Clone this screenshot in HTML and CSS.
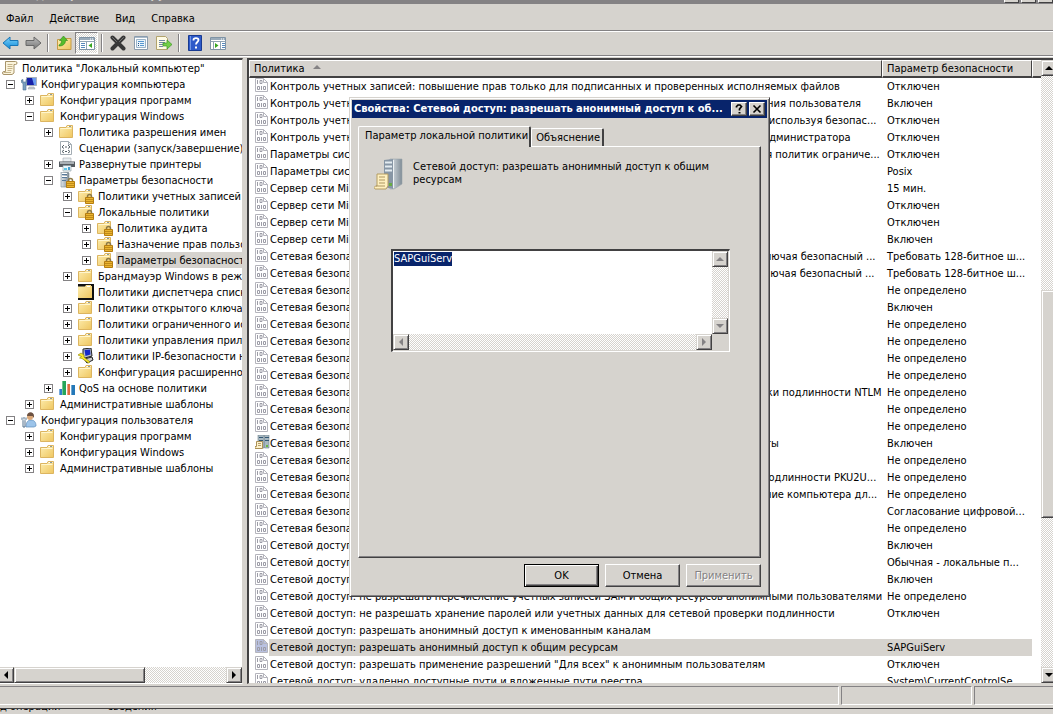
FILE: index.html
```html
<!DOCTYPE html>
<html lang="ru">
<head>
<meta charset="utf-8">
<title>Редактор локальной групповой политики</title>
<link rel="stylesheet" href="styles.css">
</head>
<body>
<svg class="sprite" aria-hidden="true">
  <defs>
    <linearGradient id="g-folder" x1="0" y1="0" x2="1" y2="1"><stop offset="0" stop-color="#fdeeb0"/><stop offset="1" stop-color="#efc660"/></linearGradient>
    <linearGradient id="g-tower" x1="0" y1="0" x2="1" y2="0"><stop offset="0" stop-color="#dfe5ea"/><stop offset="1" stop-color="#7f8c96"/></linearGradient>
    <linearGradient id="g-blue" x1="0" y1="0" x2="0" y2="1"><stop offset="0" stop-color="#7fd3fb"/><stop offset="1" stop-color="#0f8ad8"/></linearGradient>
    <linearGradient id="g-gray" x1="0" y1="0" x2="0" y2="1"><stop offset="0" stop-color="#bdbdbd"/><stop offset="1" stop-color="#777"/></linearGradient>
  </defs>
  <symbol id="folder" viewBox="0 0 16 16"><path d="M.5 3.500H7l1-2h5.500v12H.5z" fill="url(#g-folder)" stroke="#dcb560"/><path d="M8.500 2.500h4" stroke="#fff"/><path d="M10 2.500h2" stroke="#8a9aa0"/><path d="M1.500 4.500h11" stroke="#fff6cf"/></symbol>
  <symbol id="lock" viewBox="0 0 16 16"><path d="M9.500 10V8.500a2 2 0 0 1 4 0V10" fill="none" stroke="#8c7a4a" stroke-width="1.500"/><path d="M7.500 9.500h8v6h-8z" fill="#eab530" stroke="#b57d10"/><path d="M8 11.500h7M8 13.500h7" stroke="#c18a18"/></symbol>
  <symbol id="folder-lock" viewBox="0 0 16 16"><use href="#folder"/><use href="#lock"/></symbol>
  <symbol id="scroll" viewBox="0 0 16 16"><path d="M3.500 1.500h10a1.500 1.500 0 0 1 0 3H12v8.500l-2 1.500H2a1.500 1.500 0 0 1 0-3h1.500z" fill="#fbf4dc" stroke="#a8946a"/><path d="M5.500 4.500h5M5.500 6.500h5M5.500 8.500h5M5.500 10.500h4M2 12.500h7" stroke="#c5b48a"/></symbol>
  <symbol id="computer" viewBox="0 0 16 16"><path d="M5.500 1.500h10v8h-10z" fill="#1722a8" stroke="#aab2ba"/><path d="M11 2h4v7h-2z" fill="#6c9cf0"/><path d="M8 11h5l1 2H7z" fill="#c8cdd2" stroke="#8b959d" stroke-width=".5"/><path d="M.5 4v2.500l1.500 1V14h3V7.500l1-1V4L5 3.500V6H2V3.500z" fill="#7aa0c0" stroke="#4d7090" stroke-width=".6"/></symbol>
  <symbol id="user" viewBox="0 0 16 16"><path d="M5 15c0-5 2-7 5-7s5 2 5 6l-2 1z" fill="#9cc4ea" stroke="#5d8cba" stroke-width=".7"/><circle cx="9" cy="5" r="3" fill="#dba878"/><path d="M6 4c0-5 7-5 7 0v2l-1.500-2z" fill="#6c5141"/><path d="M1 5.500v2l1 1V15h2V8.500l1-1v-2M3 5v2.500" fill="none" stroke="#52718d"/></symbol>
  <symbol id="script" viewBox="0 0 16 16"><path d="M1.500 1.500h8l3 3v10h-11z" fill="#fff" stroke="#a3acb3"/><path d="M9.500 1.500v3h3" fill="none" stroke="#a3acb3"/><path d="M5 5L3 7l2 1.500M9 5l2 2-2 1.500M6 7h2M5 10l-2 1.500L5 13M9 10l2 1.500L9 13M6 11.500h2" fill="none" stroke="#59636b"/></symbol>
  <symbol id="printer" viewBox="0 0 16 16"><path d="M4 2h8v4H4z" fill="#e8edf0" stroke="#a5adb3" stroke-width=".6"/><path d="M0 5.500h16V11H0z" fill="#555b60"/><path d="M1 6h14v2H1z" fill="#a9b0b5"/><path d="M4 9.500h8V15H4z" fill="#e9f6fb" stroke="#88979f" stroke-width=".6"/><path d="M5 12h3v2H5z" fill="#5ec6e8"/><path d="M9 11h2v3H9z" fill="#4b9fcb"/></symbol>
  <symbol id="server-lock" viewBox="0 0 16 16"><path d="M2 0h7l1 1v14H2z" fill="url(#g-tower)" stroke="#7d8b96" stroke-width=".6"/><path d="M3 2.500h5M3 5.500h5M3 8.500h4" stroke="#56789b"/><path d="M3 1.500h5M3 4.500h5" stroke="#fff"/><use href="#lock"/></symbol>
  <symbol id="folder-dark" viewBox="0 0 16 16"><path d="M0 0h16v16H0z" fill="#111"/><path d="M0 2.500h7l1-1.500h5v1h1v12H0z" fill="url(#g-folder)"/><path d="M9 2.500h3" stroke="#fff"/></symbol>
  <symbol id="ipsec" viewBox="0 0 16 16"><path d="M5 1l8-1 1 8-7 2-2-1z" fill="#b7bdc8" stroke="#222"/><path d="M6.500 2l5.500-.5.500 5-5 1.500z" fill="#1428c8"/><path d="M6 11l8-2 1 3-6 3z" fill="#ccc" stroke="#222"/><path d="M0 7l3-2 3 2v2l6 5-1.500 1L4 10.500 1.500 10l2-1.500z" fill="#f7e92a" stroke="#8e8200" stroke-width=".6"/></symbol>
  <symbol id="bars" viewBox="0 0 16 16"><path d="M0 9h3v6H0z" fill="#2d7dcb"/><path d="M3 1h4v14H3z" fill="#25a55a"/><path d="M8 4h3v11H8z" fill="#df6c3f"/><path d="M12 5h4v10h-4z" fill="#2378b8"/><path d="M.5 9v6M3.500 1v14M8.500 4v11M12.500 5v10" stroke="#fff" stroke-opacity=".35"/></symbol>
  <symbol id="binary" viewBox="0 0 15 15"><path d="M.5.500h8l4 4v9H.5z" class="sheet" stroke="#b5b5bd"/><path d="M8.500.500v4h4" fill="none" stroke="#b5b5bd"/><path d="M2.500 2v4M5 2.500h2v3H5zM2.500 8.500h2v3h-2zM6.500 8v4M8.500 8.500h2v3h-2z" fill="none" stroke="#9c9ca6"/></symbol>
  <symbol id="servers" viewBox="0 0 15 15"><path d="M3 0h6v13H3zM9.500 0H14v13H9.500z" fill="#a8b8c1" stroke="#71838f" stroke-width=".6"/><path d="M4 2.500h4M4 5.500h4M10 2.500h4M10 5.500h4" stroke="#315673"/><path d="M11 10h2v2h-2z" fill="#67b93e"/><path d="M1.500 6.500h6v7H0v-2h1.500z" fill="#fdf2cc" stroke="#ac9156"/><path d="M3 8.500h3M3 10.500h3" stroke="#b69c68"/></symbol>
  <symbol id="back" viewBox="0 0 18 16"><path d="M1 8l7-6v3.500h8v5H8V14z" fill="url(#g-blue)" stroke="#1875b5"/></symbol>
  <symbol id="forward" viewBox="0 0 18 16"><path d="M17 8l-7-6v3.500H2v5h8V14z" fill="url(#g-gray)" stroke="#686868"/></symbol>
  <symbol id="up" viewBox="0 0 16 16"><path d="M1.500 4.500H6l1-1h8v11H1.500z" fill="url(#g-folder)" stroke="#c59a45"/><path d="M3 10c2-1 2.500-2.500 2.500-4.500H3.500L7.500 1l4 4.500h-2C9.500 9 7 11 3 11z" fill="#55bd2c" stroke="#2d8419" stroke-width=".6"/></symbol>
  <symbol id="panel" viewBox="0 0 18 16"><path d="M1.500 2.500h15v12h-15z" fill="#fff" stroke="#7f93a5"/><path d="M2 3h14v2H2z" fill="#9aabba"/><path d="M12 4h1M14 4h1" stroke="#fff"/><path d="M1.500 6.500h15M8.500 7v7" stroke="#91a4b4"/><path d="M3 8.500h4M3 10.500h4M3 12.500h4" stroke="#5687bb"/><path d="M14 8v5l-3.500-2.500z" fill="#36a51f"/></symbol>
  <symbol id="panel-right" viewBox="0 0 18 16"><path d="M1.500 2.500h15v12h-15z" fill="#fff" stroke="#7f93a5"/><path d="M2 3h14v2H2z" fill="#9aabba"/><path d="M12 4h1M14 4h1" stroke="#fff"/><path d="M1.500 6.500h15M11.500 7v7M4.500 7v7" stroke="#91a4b4"/><path d="M13 8.500h3M13 10.500h3M13 12.500h3" stroke="#5687bb"/><path d="M6 8v5l3.500-2.500z" fill="#36a51f"/></symbol>
  <symbol id="cross" viewBox="0 0 16 16"><path d="M2.500 2.500l11 11M13.500 2.500l-11 11" stroke="#383838" stroke-width="4" stroke-linecap="round"/><path d="M2.500 2.500l4 4M13.500 2.500l-4 4" stroke="#777" stroke-linecap="round"/></symbol>
  <symbol id="props" viewBox="0 0 16 16"><path d="M1.500 1.500h13v13h-13z" fill="#fff" stroke="#8b9cad"/><path d="M2 2.500h12" stroke="#aabac9"/><path d="M3.500 4.500h9v8h-9z" fill="#eaf4fb" stroke="#9bb3c7"/><path d="M5 6.500h6M7 8.500h4M7 10.500h4" stroke="#5797cf"/><path d="M5 8.500h1M5 10.500h1" stroke="#234f82"/></symbol>
  <symbol id="export" viewBox="0 0 16 16"><path d="M.5 1.500h9l2 2v11H.5z" fill="#fffbe5" stroke="#b2a36d"/><path d="M3 5.500h6M3 7.500h6M3 9.500h4M3 11.500h4" stroke="#6f86a5"/><path d="M7 8h4V5l5 4.500-5 4.500v-3H7z" fill="#72ce47" stroke="#3d9925" stroke-width=".7"/></symbol>
  <symbol id="help" viewBox="0 0 14 16"><path d="M.5.500h13v15H.5z" fill="#2e5ac9" stroke="#193a91"/><path d="M2.500 1v14" stroke="#7195e4"/><path d="M5.500 5.500V5c0-2.500 5-2.500 5 0 0 2-2.500 2-2.500 4.500" fill="none" stroke="#fff" stroke-width="1.800"/><path d="M7 11.500h2v2H7z" fill="#fff"/></symbol>
  <symbol id="policy-server" viewBox="0 0 32 32"><path d="M16 1h12v25l-8 5h-4z" fill="url(#g-tower)" stroke="#9aa4ab" stroke-width=".6"/><path d="M10 2l9-1v30l-9-2z" fill="#8796a5"/><path d="M11 4.500h7M11 8.500h7M11 12.500h7" stroke="#e4ecf1" stroke-width="2"/><path d="M19.500 2v28" stroke="#edf2f4"/><path d="M15 25h3v3h-3z" fill="#67ac43"/><path d="M3 16h11v12l-2 3H1c-2-2 0-3 2-3z" fill="#fff0bf" stroke="#b49c63"/><path d="M5 19h6M5 22h6M5 25h6M2 28h9" stroke="#ad9663"/></symbol>
</svg>

<div class="window">
  <header class="titlebar">
    <span class="caption">Редактор локальной групповой политики</span>
    <span class="caption-buttons"><i></i><i></i><i></i></span>
  </header>
  <nav class="menubar" aria-label="Меню">
    <button>Файл</button><button>Действие</button><button>Вид</button><button>Справка</button>
  </nav>
  <div class="toolbar" role="toolbar" aria-label="Инструменты">
    <button aria-label="Назад"><svg class="w18"><use href="#back"/></svg></button>
    <button aria-label="Вперед"><svg class="w18"><use href="#forward"/></svg></button>
    <span class="sep"></span>
    <button aria-label="Вверх"><svg><use href="#up"/></svg></button>
    <button class="pressed" aria-label="Дерево консоли"><svg class="w18"><use href="#panel"/></svg></button>
    <span class="sep"></span>
    <button aria-label="Удалить"><svg><use href="#cross"/></svg></button>
    <button aria-label="Свойства"><svg><use href="#props"/></svg></button>
    <button aria-label="Экспортировать список"><svg><use href="#export"/></svg></button>
    <span class="sep"></span>
    <button aria-label="Справка по окну"><svg><use href="#help"/></svg></button>
    <button aria-label="Панель действий"><svg class="w18"><use href="#panel-right"/></svg></button>
  </div>

  <main class="panes">
    <section class="tree-pane">
      <div class="tree">
        <div class="node root"><svg><use href="#scroll"/></svg><span>Политика "Локальный компьютер"</span></div>
        <ul>
          <li><div class="node"><button class="exp" aria-label="Свернуть"></button><svg><use href="#computer"/></svg><span>Конфигурация компьютера</span></div>
            <ul>
              <li><div class="node"><button class="exp plus" aria-label="Развернуть"></button><svg><use href="#folder"/></svg><span>Конфигурация программ</span></div></li>
              <li><div class="node"><button class="exp" aria-label="Свернуть"></button><svg><use href="#folder"/></svg><span>Конфигурация Windows</span></div>
                <ul>
                  <li><div class="node"><button class="exp plus" aria-label="Развернуть"></button><svg><use href="#folder"/></svg><span>Политика разрешения имен</span></div></li>
                  <li><div class="node leaf"><svg><use href="#script"/></svg><span>Сценарии (запуск/завершение)</span></div></li>
                  <li><div class="node"><button class="exp plus" aria-label="Развернуть"></button><svg><use href="#printer"/></svg><span>Развернутые принтеры</span></div></li>
                  <li><div class="node"><button class="exp" aria-label="Свернуть"></button><svg><use href="#server-lock"/></svg><span>Параметры безопасности</span></div>
                    <ul>
                      <li><div class="node"><button class="exp plus" aria-label="Развернуть"></button><svg><use href="#folder-lock"/></svg><span>Политики учетных записей</span></div></li>
                      <li><div class="node"><button class="exp" aria-label="Свернуть"></button><svg><use href="#folder-lock"/></svg><span>Локальные политики</span></div>
                        <ul>
                          <li><div class="node"><button class="exp plus" aria-label="Развернуть"></button><svg><use href="#folder-lock"/></svg><span>Политика аудита</span></div></li>
                          <li><div class="node"><button class="exp plus" aria-label="Развернуть"></button><svg><use href="#folder-lock"/></svg><span>Назначение прав пользователя</span></div></li>
                          <li><div class="node selected"><button class="exp plus" aria-label="Развернуть"></button><svg><use href="#folder-lock"/></svg><span>Параметры безопасности</span></div></li>
                        </ul>
                      </li>
                      <li><div class="node"><button class="exp plus" aria-label="Развернуть"></button><svg><use href="#folder"/></svg><span>Брандмауэр Windows в режиме повышенной безопасности</span></div></li>
                      <li><div class="node leaf"><svg><use href="#folder-dark"/></svg><span>Политики диспетчера списка сетей</span></div></li>
                      <li><div class="node"><button class="exp plus" aria-label="Развернуть"></button><svg><use href="#folder"/></svg><span>Политики открытого ключа</span></div></li>
                      <li><div class="node"><button class="exp plus" aria-label="Развернуть"></button><svg><use href="#folder"/></svg><span>Политики ограниченного использования программ</span></div></li>
                      <li><div class="node"><button class="exp plus" aria-label="Развернуть"></button><svg><use href="#folder"/></svg><span>Политики управления приложениями</span></div></li>
                      <li><div class="node"><button class="exp plus" aria-label="Развернуть"></button><svg><use href="#ipsec"/></svg><span>Политики IP-безопасности на "Локальный компьютер"</span></div></li>
                      <li><div class="node"><button class="exp plus" aria-label="Развернуть"></button><svg><use href="#folder"/></svg><span>Конфигурация расширенной политики аудита</span></div></li>
                    </ul>
                  </li>
                  <li><div class="node"><button class="exp plus" aria-label="Развернуть"></button><svg><use href="#bars"/></svg><span>QoS на основе политики</span></div></li>
                </ul>
              </li>
              <li><div class="node"><button class="exp plus" aria-label="Развернуть"></button><svg><use href="#folder"/></svg><span>Административные шаблоны</span></div></li>
            </ul>
          </li>
          <li><div class="node"><button class="exp" aria-label="Свернуть"></button><svg><use href="#user"/></svg><span>Конфигурация пользователя</span></div>
            <ul>
              <li><div class="node"><button class="exp plus" aria-label="Развернуть"></button><svg><use href="#folder"/></svg><span>Конфигурация программ</span></div></li>
              <li><div class="node"><button class="exp plus" aria-label="Развернуть"></button><svg><use href="#folder"/></svg><span>Конфигурация Windows</span></div></li>
              <li><div class="node"><button class="exp plus" aria-label="Развернуть"></button><svg><use href="#folder"/></svg><span>Административные шаблоны</span></div></li>
            </ul>
          </li>
        </ul>
      </div>
      <div class="hscroll cut">
        <button class="sb left" aria-label="Прокрутить влево"></button>
        <span class="thumb"></span><span class="track"></span>
        <button class="sb right" aria-label="Прокрутить вправо"></button>
      </div>
    </section>

    <section class="list-pane">
      <div class="list">
        <table>
          <colgroup><col><col class="c-value"><col class="c-rest"></colgroup>
          <thead><tr><th scope="col">Политика<span class="sort"></span></th><th scope="col">Параметр безопасности</th><td></td></tr></thead>
          <tbody>
            <tr><td><svg><use href="#binary"/></svg><span>Контроль учетных записей: повышение прав только для подписанных и проверенных исполняемых файлов</span></td><td>Отключен</td></tr>
            <tr><td><svg><use href="#binary"/></svg><span>Контроль учетных записей: при сбое записи в файл и реестр виртуализация в место размещения пользователя</span></td><td>Включен</td></tr>
            <tr><td><svg><use href="#binary"/></svg><span>Контроль учетных записей: разрешать UIAccess-приложениям запросить повышение прав, не используя безопас...</span></td><td>Отключен</td></tr>
            <tr><td><svg><use href="#binary"/></svg><span>Контроль учетных записей: режим одобрения администратором встроенной учетной записи администратора</span></td><td>Отключен</td></tr>
            <tr><td><svg><use href="#binary"/></svg><span>Параметры системы: применять правила сертификатов для исполняемых файлов Windows для политик ограниче...</span></td><td>Отключен</td></tr>
            <tr><td><svg><use href="#binary"/></svg><span>Параметры системы: необязательные подсистемы</span></td><td>Posix</td></tr>
            <tr><td><svg><use href="#binary"/></svg><span>Сервер сети Microsoft: время бездействия до приостановки сеанса</span></td><td>15 мин.</td></tr>
            <tr><td><svg><use href="#binary"/></svg><span>Сервер сети Microsoft: использовать цифровую подпись (всегда)</span></td><td>Отключен</td></tr>
            <tr><td><svg><use href="#binary"/></svg><span>Сервер сети Microsoft: использовать цифровую подпись (с согласия клиента)</span></td><td>Отключен</td></tr>
            <tr><td><svg><use href="#binary"/></svg><span>Сервер сети Microsoft: отключать клиентов по истечении разрешенных часов</span></td><td>Включен</td></tr>
            <tr><td><svg><use href="#binary"/></svg><span>Сетевая безопасность: минимальная базовая безопасность для клиента на базе NTLM SSP (включая безопасный ...</span></td><td>Требовать 128-битное ш...</td></tr>
            <tr><td><svg><use href="#binary"/></svg><span>Сетевая безопасность: минимальная базовая безопасность для сервера на базе NTLM SSP (включая безопасный ...</span></td><td>Требовать 128-битное ш...</td></tr>
            <tr><td><svg><use href="#binary"/></svg><span>Сетевая безопасность: настройка типов шифрования, разрешенных Kerberos</span></td><td>Не определено</td></tr>
            <tr><td><svg><use href="#binary"/></svg><span>Сетевая безопасность: не хранить хэш-значений LAN Manager при смене пароля</span></td><td>Включен</td></tr>
            <tr><td><svg><use href="#binary"/></svg><span>Сетевая безопасность: ограничения NTLM: аудит входящего трафика NTLM</span></td><td>Не определено</td></tr>
            <tr><td><svg><use href="#binary"/></svg><span>Сетевая безопасность: ограничения NTLM: аудит проверки подлинности</span></td><td>Не определено</td></tr>
            <tr><td><svg><use href="#binary"/></svg><span>Сетевая безопасность: ограничения NTLM: входящий трафик NTLM</span></td><td>Не определено</td></tr>
            <tr><td><svg><use href="#binary"/></svg><span>Сетевая безопасность: ограничения NTLM: исходящий трафик NTLM</span></td><td>Не определено</td></tr>
            <tr><td><svg><use href="#binary"/></svg><span>Сетевая безопасность: ограничения NTLM: включить исключения удаленных серверов проверки подлинности NTLM</span></td><td>Не определено</td></tr>
            <tr><td><svg><use href="#binary"/></svg><span>Сетевая безопасность: ограничения NTLM: исключения для серверов</span></td><td>Не определено</td></tr>
            <tr><td><svg><use href="#binary"/></svg><span>Сетевая безопасность: ограничения NTLM: проверка подлинности NTLM</span></td><td>Не определено</td></tr>
            <tr><td><svg><use href="#servers"/></svg><span>Сетевая безопасность: обязательный вывод из сеанса по истечении разрешенных часов работы</span></td><td>Включен</td></tr>
            <tr><td><svg><use href="#binary"/></svg><span>Сетевая безопасность: разрешить LocalSystem нулевые сеансы</span></td><td>Не определено</td></tr>
            <tr><td><svg><use href="#binary"/></svg><span>Сетевая безопасность: разрешить применение сетевых удостоверений в запросах проверки подлинности PKU2U...</span></td><td>Не определено</td></tr>
            <tr><td><svg><use href="#binary"/></svg><span>Сетевая безопасность: разрешить учетной записи локальной системы применять удостоверение компьютера дл...</span></td><td>Не определено</td></tr>
            <tr><td><svg><use href="#binary"/></svg><span>Сетевая безопасность: требование цифровой подписи для LDAP-клиента</span></td><td>Согласование цифровой...</td></tr>
            <tr><td><svg><use href="#binary"/></svg><span>Сетевая безопасность: уровень проверки подлинности LAN Manager</span></td><td>Не определено</td></tr>
            <tr><td><svg><use href="#binary"/></svg><span>Сетевой доступ: запретить анонимный доступ к именованным каналам</span></td><td>Включен</td></tr>
            <tr><td><svg><use href="#binary"/></svg><span>Сетевой доступ: модель совместного доступа и безопасности</span></td><td>Обычная - локальные п...</td></tr>
            <tr><td><svg><use href="#binary"/></svg><span>Сетевой доступ: не разрешать перечисление учетных записей SAM</span></td><td>Включен</td></tr>
            <tr><td><svg><use href="#binary"/></svg><span>Сетевой доступ: не разрешать перечисление учетных записей SAM и общих ресурсов анонимными пользователями</span></td><td>Не определено</td></tr>
            <tr><td><svg><use href="#binary"/></svg><span>Сетевой доступ: не разрешать хранение паролей или учетных данных для сетевой проверки подлинности</span></td><td>Отключен</td></tr>
            <tr><td><svg><use href="#binary"/></svg><span>Сетевой доступ: разрешать анонимный доступ к именованным каналам</span></td><td></td></tr>
            <tr class="selected"><td><svg><use href="#binary"/></svg><span>Сетевой доступ: разрешать анонимный доступ к общим ресурсам</span></td><td>SAPGuiServ</td></tr>
            <tr><td><svg><use href="#binary"/></svg><span>Сетевой доступ: разрешать применение разрешений "Для всех" к анонимным пользователям</span></td><td>Отключен</td></tr>
            <tr><td><svg><use href="#binary"/></svg><span>Сетевой доступ: удаленно доступные пути и вложенные пути реестра</span></td><td>System\CurrentControlSe...</td></tr>
          </tbody>
        </table>
      </div>
      <div class="vclip"><div class="vscroll">
        <button class="sb up" aria-label="Прокрутить вверх"></button>
        <span class="track above"></span><span class="thumb"></span><span class="track below"></span>
        <button class="sb down" aria-label="Прокрутить вниз"></button>
      </div></div>
    </section>
  </main>

  <footer class="statusbar"><span></span><span></span><span></span></footer>
  <div class="backdrop"><span>д операций</span><span>сведения</span></div>

  <form class="dialog" role="dialog" aria-labelledby="dlg-title">
    <div class="dlg-title">
      <h1 id="dlg-title">Свойства: Сетевой доступ: разрешать анонимный доступ к об...</h1>
      <button type="button" aria-label="Справка"><svg viewBox="0 0 12 10"><path d="M3.500 3.500V2.500L5 1h2l1.500 1.500L6.500 5v1.500" fill="none" stroke="#000" stroke-width="1.700"/><path d="M5.500 8h2v1.500h-2z"/></svg></button>
      <button type="button" aria-label="Закрыть"><svg viewBox="0 0 12 10"><path d="M2.500 1.500l7 7M9.500 1.500l-7 7" stroke="#000" stroke-width="1.600"/></svg></button>
    </div>
    <div class="tabs" role="tablist">
      <button type="button" role="tab" aria-selected="true" class="active">Параметр локальной политики</button>
      <button type="button" role="tab" aria-selected="false">Объяснение</button>
    </div>
    <div class="tabpanel" role="tabpanel">
      <div class="policy">
        <svg><use href="#policy-server"/></svg>
        <label for="value">Сетевой доступ: разрешать анонимный доступ к общим ресурсам</label>
      </div>
      <div class="memo">
        <textarea id="value" wrap="off" spellcheck="false">SAPGuiServ</textarea>
        <div class="vscroll off">
          <button type="button" class="sb up" aria-label="Вверх"></button><span class="track"></span><button type="button" class="sb down" aria-label="Вниз"></button>
        </div>
        <div class="hscroll off">
          <button type="button" class="sb left" aria-label="Влево"></button><span class="track"></span><button type="button" class="sb right" aria-label="Вправо"></button>
        </div>
      </div>
    </div>
    <div class="actions">
      <button type="submit" class="default">OK</button>
      <button type="button">Отмена</button>
      <button type="button" disabled>Применить</button>
    </div>
  </form>
</div>
<script src="script.js"></script>
</body>
</html>
```
FILE: styles.css
```css
:root {
  --face: #d6d3ce;
  --shadow: #848284;
  --dark: #424142;
  --navy: #08246b;
  --sheet: #fff;
}
* { box-sizing: border-box; }
body {
  margin: 0;
  font: 11px/14px "DejaVu Sans Condensed", "DejaVu Sans", sans-serif;
  color: #000;
  background: var(--face);
}
button {
  font: inherit;
  color: inherit;
  margin: 0;
  padding: 0;
  border: 0;
  background: none;
}
svg { display: block; flex: none; width: 16px; height: 16px; }
.sprite { position: absolute; width: 0; height: 0; }
ul { list-style: none; margin: 0; padding: 0; }

.window {
  position: relative;
  display: flex;
  flex-direction: column;
  height: 100vh;
  overflow: hidden;
}

/* caption strip */
.titlebar {
  flex: none;
  display: flex;
  justify-content: space-between;
  align-items: flex-end;
  height: 5px;
  padding: 0 0 1px 22px;
  overflow: hidden;
  background: var(--shadow);
  border-bottom: 1px solid var(--face);
}
.caption { font-weight: bold; color: var(--face); }
.caption-buttons { display: flex; gap: 2px; }
.caption-buttons i {
  width: 15px;
  height: 14px;
  background: var(--face);
  border: 1px solid;
  border-color: #fff var(--dark) var(--dark) #fff;
}

/* menu and toolbar */
.menubar {
  flex: none;
  display: flex;
  gap: 16px;
  height: 26px;
  padding: 3px 6px 0;
  align-items: center;
  border-bottom: 1px solid var(--shadow);
}
.toolbar {
  flex: none;
  display: flex;
  align-items: center;
  height: 25px;
  padding-bottom: 1px;
  border-top: 1px solid #fff;
  border-bottom: 1px solid var(--shadow);
}
.toolbar button {
  display: grid;
  place-items: center;
  width: 23px;
  height: 22px;
}
.toolbar button:first-child { width: 21px; }
.toolbar .w18 { width: 18px; }
.toolbar .pressed {
  background: repeating-conic-gradient(#fff 0 25%, var(--face) 0 50%) 0 0 / 2px 2px;
  border: 1px solid;
  border-color: var(--shadow) #fff #fff var(--shadow);
}
.sep {
  width: 2px;
  height: 18px;
  margin: 0 3px;
  border-left: 1px solid var(--shadow);
  border-right: 1px solid #fff;
}

/* panes */
.panes {
  flex: 1;
  min-height: 0;
  display: flex;
  gap: 4px;
  padding: 1px 0 2px;
  border-top: 1px solid #fff;
}
.tree-pane {
  width: 243px;
  flex: none;
  display: flex;
  flex-direction: column;
  background: #fff;
  border: solid;
  border-width: 2px 1px 1px 0;
  border-color: var(--dark) var(--face) #fff;
}
.tree { flex: 1; min-height: 0; overflow: hidden; }
.tree ul ul { padding-left: 19px; }
.node {
  display: flex;
  align-items: center;
  height: 16px;
  padding-left: 6px;
  white-space: nowrap;
}
.node svg { margin-right: 3px; }
.node.root { padding-left: 2px; }
.node.leaf { padding-left: 21px; }
.node span { flex: none; padding: 2px 1px 0; }
.node.selected span { background: var(--face); }
.exp {
  flex: none;
  width: 9px;
  height: 9px;
  margin-right: 6px;
  border: 1px solid var(--shadow);
  background: linear-gradient(#000, #000) center / 5px 1px no-repeat;
}
.exp.plus {
  background:
    linear-gradient(#000, #000) center / 5px 1px no-repeat,
    linear-gradient(#000, #000) center / 1px 5px no-repeat;
}

/* scroll bars */
.hscroll, .vscroll { display: flex; flex: none; }
.hscroll { height: 16px; }
.vscroll { width: 16px; flex-direction: column; }
.cut { overflow: hidden; }
.cut .left { margin-left: -2px; }
.sb, .thumb {
  flex: none;
  background: var(--face);
  border: 1px solid;
  border-color: var(--face) var(--dark) var(--dark) var(--face);
  box-shadow: inset 1px 1px #fff, inset -1px -1px var(--shadow);
}
.sb { display: grid; place-items: center; width: 16px; height: 16px; }
.sb::before { content: ""; border: 4px solid transparent; }
.left::before { border-left-width: 0; border-right-color: #000; }
.right::before { border-right-width: 0; border-left-color: #000; }
.up::before { border-top-width: 0; border-bottom-color: #000; }
.down::before { border-bottom-width: 0; border-top-color: #000; }
.off .left::before { border-right-color: var(--shadow); }
.off .right::before { border-left-color: var(--shadow); }
.off .up::before { border-bottom-color: var(--shadow); }
.off .down::before { border-top-color: var(--shadow); }
.track {
  flex: 1;
  background: repeating-conic-gradient(#fff 0 25%, var(--face) 0 50%) 0 0 / 2px 2px;
}
.tree-pane .thumb { width: 54%; }

/* policy list */
.list-pane {
  flex: 1;
  min-width: 0;
  display: flex;
  background: #fff;
  border: solid var(--dark);
  border-width: 2px 0 0 2px;
  border-bottom: 1px solid var(--face);
}
.list { flex: 1; min-width: 0; overflow: hidden; }
table { width: 100%; table-layout: fixed; border-collapse: separate; border-spacing: 0; }
.c-value { width: 150px; }
.c-rest { width: 9px; }
thead tr { height: 18px; background: var(--face); }
th, thead td {
  padding: 0 4px;
  font-weight: normal;
  text-align: left;
  border-top: 1px solid #fff;
  border-left: 1px solid #fff;
  border-bottom: 2px solid var(--dark);
}
th { border-right: 1px solid var(--dark); }
.sort {
  display: inline-block;
  margin: 0 8px 3px;
  border: 4px solid transparent;
  border-top-width: 0;
  border-bottom-color: var(--shadow);
}
tbody tr { height: 17px; }
tbody td { padding: 0 0 0 5px; white-space: nowrap; }
tbody td:first-child { padding-left: 6px; }
tbody td svg { float: left; width: 15px; height: 15px; }
tbody td span { display: block; margin-left: 14px; padding: 1px 0 1px 1px; line-height: 15px; }
.sheet { fill: var(--sheet); }
.selected { --sheet: #b9c1e0; }
.selected td + td, .selected td span { background: var(--face); }
.vclip { width: 12px; flex: none; display: flex; overflow: hidden; }
.list-pane .above { flex: 215; }
.list-pane .below { flex: 150; }
.list-pane .thumb { flex: 227; }

/* status bar */
.statusbar { flex: none; display: flex; gap: 2px; height: 22px; padding: 0 0 3px; }
.statusbar span { border: 1px solid; border-color: var(--shadow) #fff #fff var(--shadow); width: 131px; }
.statusbar span:first-child { flex: 1; border-left: 0; }
.statusbar span:last-child { width: 79px; border-right: 0; }
.backdrop {
  flex: none;
  display: flex;
  gap: 47px;
  align-items: flex-end;
  height: 6px;
  overflow: hidden;
  border-top: 1px solid var(--dark);
}

/* dialog */
.dialog {
  position: absolute;
  left: 349px;
  top: 97px;
  width: 421px;
  padding: 2px;
  background: var(--face);
  border: 1px solid;
  border-color: var(--face) var(--dark) var(--dark) var(--face);
  box-shadow: inset 1px 1px #fff, inset -1px -1px var(--shadow);
}
.dlg-title {
  display: flex;
  align-items: center;
  gap: 2px;
  height: 18px;
  padding: 0 2px;
  background: var(--navy);
}
h1 {
  flex: 1;
  min-width: 0;
  margin: 0;
  font-size: 11px;
  line-height: 14px;
  color: #fff;
  white-space: nowrap;
  overflow: hidden;
}
.dlg-title button {
  display: grid;
  place-items: center;
  width: 16px;
  height: 14px;
  background: var(--face);
  border: 1px solid;
  border-color: #fff var(--dark) var(--dark) #fff;
  box-shadow: inset -1px -1px var(--shadow);
}
.dlg-title svg { width: 12px; height: 10px; }
.tabs { display: flex; align-items: flex-end; padding: 8px 6px 0; }
.tabs button {
  height: 18px;
  padding: 0 2px 0 4px;
  border: solid;
  border-width: 1px 2px 0 1px;
  border-color: #fff var(--dark) #fff #fff;
  border-radius: 2px 2px 0 0;
}
.tabs .active { height: 21px; padding: 0 1px 3px 6px; margin-bottom: -1px; background: var(--face); position: relative; }
.tabpanel {
  margin: 0 6px;
  height: 412px;
  padding: 11px 15px;
  border: 1px solid;
  border-color: #fff var(--dark) var(--dark) #fff;
  box-shadow: inset -1px -1px var(--shadow);
}
.policy { display: flex; gap: 7px; height: 91px; }
.policy svg { width: 32px; height: 32px; }
.policy label { width: 300px; line-height: 13px; padding-top: 2px; }
.memo {
  display: grid;
  grid-template-columns: 1fr 16px;
  grid-template-rows: 1fr 16px;
  height: 103px;
  margin: 0 15px 0 17px;
  padding: 0 1px 1px 0;
  border: solid;
  border-width: 2px 1px 1px 2px;
  border-color: var(--dark) #fff #fff var(--dark);
}
textarea {
  min-width: 0;
  width: 100%;
  height: 100%;
  margin: 0;
  padding: 1px;
  border: 0;
  outline: 0;
  resize: none;
  overflow: hidden;
  font: inherit;
  background: #fff;
}
textarea::selection { background: var(--navy); color: #fff; }
.actions { display: flex; justify-content: flex-end; gap: 6px; padding: 6px 6px 7px; }
.actions button {
  width: 75px;
  height: 23px;
  border: 1px solid;
  border-color: #fff var(--dark) var(--dark) #fff;
  box-shadow: inset -1px -1px var(--shadow);
}
.actions .default {
  border-color: #000;
  box-shadow: inset 1px 1px #fff, inset -1px -1px var(--dark), inset -2px -2px var(--shadow);
}
.actions button:disabled { color: var(--shadow); text-shadow: 1px 1px #fff; }
```
FILE: script.js
```js
const value = document.getElementById('value');
value.focus();
value.select();
```
